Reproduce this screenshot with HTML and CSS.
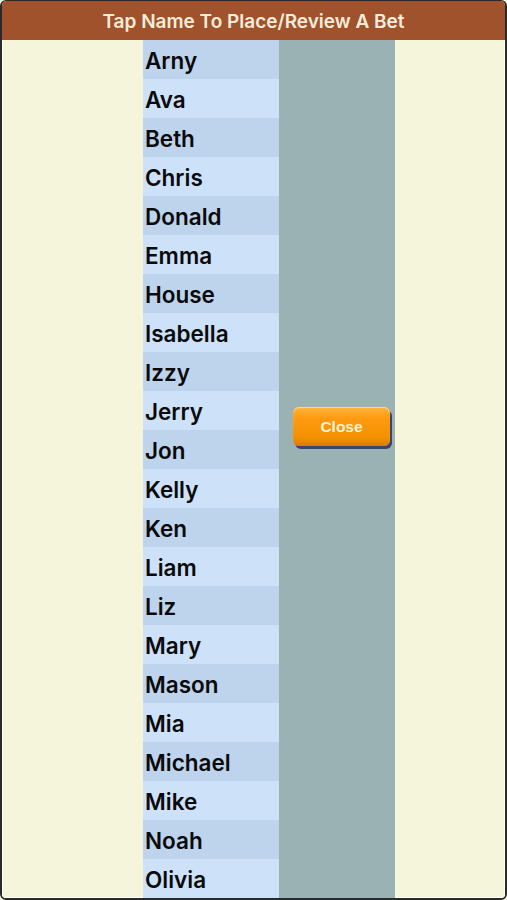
FILE: index.html
```html
<!DOCTYPE html>
<html>
<head>
<meta charset="utf-8">
<link rel="stylesheet" href="styles.css">
</head>
<body>
<div class="frame">
  <header class="bar">Tap Name To Place/Review A Bet</header>
  <main class="content">
    <div class="spacer"></div>
    <ul class="names">
      <li>Arny</li><li>Ava</li><li>Beth</li><li>Chris</li><li>Donald</li><li>Emma</li>
      <li>House</li><li>Isabella</li><li>Izzy</li><li>Jerry</li><li>Jon</li><li>Kelly</li>
      <li>Ken</li><li>Liam</li><li>Liz</li><li>Mary</li><li>Mason</li><li>Mia</li>
      <li>Michael</li><li>Mike</li><li>Noah</li><li>Olivia</li>
    </ul>
    <div class="side">
      <button class="close">Close</button>
    </div>
  </main>
</div>
</body>
</html>
```
FILE: styles.css
```css
* { box-sizing: border-box; }
html, body { margin: 0; padding: 0; }
body { width: 507px; height: 900px; overflow: hidden; background: #f5f5dc; }
.frame {
  width: 507px; height: 900px;
  border: 2px solid #2a2a2a;
  border-top-width: 1px;
  border-radius: 6px;
  overflow: hidden;
  display: flex; flex-direction: column;
  background: #f5f5dc;
}
.bar {
  height: 39px; flex: none;
  background: #a0522d;
  color: #f7ecd9;
  font-family: Inter, "Liberation Sans", sans-serif;
  font-weight: 600;
  font-size: 19px;
  display: flex; align-items: center; justify-content: center;
  padding-top: 1px;
}
.content { flex: 1; display: flex; min-height: 0; box-shadow: inset 1px 0 0 #fff, inset -1px 0 0 #fff, inset 0 -1px 0 #fff; }
.spacer { width: 141px; flex: none; }
.names {
  list-style: none; margin: 0; padding: 0;
  width: 136px; flex: none;
  font-family: Inter, "Liberation Sans", sans-serif;
  font-weight: 600;
  font-size: 22.5px;
  color: #0a0a0a;
}
.names li {
  height: 39px; line-height: 41px;
  padding-left: 2px;
  background: #bed3ec;
  white-space: nowrap;
}
.names li:nth-child(even) { background: #cde1f9; }
.side {
  width: 116px; flex: none;
  background: #9bb2b5;
  padding: 367px 0 0 14px;
}
.close {
  width: 97px; height: 39px;
  border: none; border-radius: 6px;
  background: linear-gradient(#ffb43a 0%, #ff9a10 30%, #f39000 80%, #d97a00 100%);
  box-shadow: 2px 3px 0 #3b4470, inset 0 1px 1px rgba(255,255,255,0.5);
  color: #fff3d6;
  font-family: "Liberation Sans", Arial, sans-serif;
  font-weight: bold; font-size: 15.5px;
  padding: 0; margin: 0;
}
```
